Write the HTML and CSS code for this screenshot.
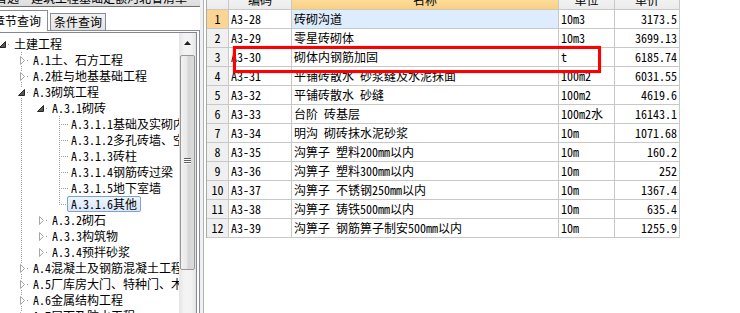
FILE: index.html
```html
<!DOCTYPE html>
<html lang="zh-CN">
<head>
    <meta charset="UTF-8">
    <title>定额查询</title>
    <link rel="stylesheet" href="styles.css">
</head>
<body>
    <div class="app">
        <div class="side">
            <div class="combo">
                <span class="combo-text">首选&nbsp;&nbsp;建筑工程基础定额河北省清单</span>
                <svg class="combo-arrow" width="7" height="4"><path d="M0 0h7l-3.5 4z" fill="#000"/></svg>
            </div>

            <div class="tabs">
                <div class="tab tab-on">章节查询</div>
                <div class="tab">条件查询</div>
            </div>

            <div class="page">
                <div class="tree-box">
                    <div class="tree">
                        <div class="row">
                            <span class="x"><svg width="17" height="16"><path d="M12.5 5.5v6h-6z" fill="#595959" stroke="#262626"/><rect x="15" y="8" width="1" height="1" fill="#a0a0a0"/></svg></span>
                            <span class="t">土建工程</span>
                        </div>
                        <div class="row">
                            <span class="g"></span>
                            <span class="x v"><svg width="17" height="16"><rect x="7" y="3" width="7" height="11" fill="#fff"/><path d="M8.5 4.5l4 4-4 4z" fill="#fff" stroke="#a6a6a6"/><rect x="15" y="8" width="1" height="1" fill="#a0a0a0"/></svg></span>
                            <span class="t">A.1土、石方工程</span>
                        </div>
                        <div class="row">
                            <span class="g"></span>
                            <span class="x v"><svg width="17" height="16"><rect x="7" y="3" width="7" height="11" fill="#fff"/><path d="M8.5 4.5l4 4-4 4z" fill="#fff" stroke="#a6a6a6"/><rect x="15" y="8" width="1" height="1" fill="#a0a0a0"/></svg></span>
                            <span class="t">A.2桩与地基基础工程</span>
                        </div>
                        <div class="row">
                            <span class="g"></span>
                            <span class="x v"><svg width="17" height="16"><rect x="6" y="3" width="8" height="10" fill="#fff"/><path d="M12.5 5.5v6h-6z" fill="#595959" stroke="#262626"/><rect x="15" y="8" width="1" height="1" fill="#a0a0a0"/></svg></span>
                            <span class="t">A.3砌筑工程</span>
                        </div>
                        <div class="row">
                            <span class="g"></span><span class="g v"></span>
                            <span class="x"><svg width="17" height="16"><path d="M12.5 5.5v6h-6z" fill="#595959" stroke="#262626"/><rect x="15" y="8" width="1" height="1" fill="#a0a0a0"/></svg></span>
                            <span class="t">A.3.1砌砖</span>
                        </div>
                        <div class="row">
                            <span class="g"></span><span class="g v"></span><span class="g"></span><span class="l"></span>
                            <span class="t">A.3.1.1基础及实砌内外墙</span>
                        </div>
                        <div class="row">
                            <span class="g"></span><span class="g v"></span><span class="g"></span><span class="l"></span>
                            <span class="t">A.3.1.2多孔砖墙、空心砖墙</span>
                        </div>
                        <div class="row">
                            <span class="g"></span><span class="g v"></span><span class="g"></span><span class="l"></span>
                            <span class="t">A.3.1.3砖柱</span>
                        </div>
                        <div class="row">
                            <span class="g"></span><span class="g v"></span><span class="g"></span><span class="l"></span>
                            <span class="t">A.3.1.4钢筋砖过梁</span>
                        </div>
                        <div class="row">
                            <span class="g"></span><span class="g v"></span><span class="g"></span><span class="l"></span>
                            <span class="t">A.3.1.5地下室墙</span>
                        </div>
                        <div class="row">
                            <span class="g"></span><span class="g v"></span><span class="g"></span><span class="l l-end"></span>
                            <span class="t t-on">A.3.1.6其他</span>
                        </div>
                        <div class="row">
                            <span class="g"></span><span class="g v"></span>
                            <span class="x"><svg width="17" height="16"><path d="M8.5 4.5l4 4-4 4z" fill="#fff" stroke="#a6a6a6"/><rect x="15" y="8" width="1" height="1" fill="#a0a0a0"/></svg></span>
                            <span class="t">A.3.2砌石</span>
                        </div>
                        <div class="row">
                            <span class="g"></span><span class="g v"></span>
                            <span class="x"><svg width="17" height="16"><path d="M8.5 4.5l4 4-4 4z" fill="#fff" stroke="#a6a6a6"/><rect x="15" y="8" width="1" height="1" fill="#a0a0a0"/></svg></span>
                            <span class="t">A.3.3构筑物</span>
                        </div>
                        <div class="row">
                            <span class="g"></span><span class="g v"></span>
                            <span class="x"><svg width="17" height="16"><path d="M8.5 4.5l4 4-4 4z" fill="#fff" stroke="#a6a6a6"/><rect x="15" y="8" width="1" height="1" fill="#a0a0a0"/></svg></span>
                            <span class="t">A.3.4预拌砂浆</span>
                        </div>
                        <div class="row">
                            <span class="g"></span>
                            <span class="x v"><svg width="17" height="16"><rect x="7" y="3" width="7" height="11" fill="#fff"/><path d="M8.5 4.5l4 4-4 4z" fill="#fff" stroke="#a6a6a6"/><rect x="15" y="8" width="1" height="1" fill="#a0a0a0"/></svg></span>
                            <span class="t">A.4混凝土及钢筋混凝土工程</span>
                        </div>
                        <div class="row">
                            <span class="g"></span>
                            <span class="x v"><svg width="17" height="16"><rect x="7" y="3" width="7" height="11" fill="#fff"/><path d="M8.5 4.5l4 4-4 4z" fill="#fff" stroke="#a6a6a6"/><rect x="15" y="8" width="1" height="1" fill="#a0a0a0"/></svg></span>
                            <span class="t">A.5厂库房大门、特种门、木结构工程</span>
                        </div>
                        <div class="row">
                            <span class="g"></span>
                            <span class="x v"><svg width="17" height="16"><rect x="7" y="3" width="7" height="11" fill="#fff"/><path d="M8.5 4.5l4 4-4 4z" fill="#fff" stroke="#a6a6a6"/><rect x="15" y="8" width="1" height="1" fill="#a0a0a0"/></svg></span>
                            <span class="t">A.6金属结构工程</span>
                        </div>
                        <div class="row">
                            <span class="g"></span>
                            <span class="x v"><svg width="17" height="16"><rect x="7" y="3" width="7" height="11" fill="#fff"/><path d="M8.5 4.5l4 4-4 4z" fill="#fff" stroke="#a6a6a6"/><rect x="15" y="8" width="1" height="1" fill="#a0a0a0"/></svg></span>
                            <span class="t">A.7屋面及防水工程</span>
                        </div>
                    </div>

                    <div class="vscroll">
                        <div class="sb-up"><svg width="7" height="4"><path d="M3.5 0l3.5 4h-7z" fill="#222"/></svg></div>
                        <div class="sb-thumb">
                            <span></span><span></span><span></span>
                        </div>
                    </div>
                </div>
            </div>
        </div>

        <div class="split"></div>

        <div class="pane">
            <div class="grid">
                <div class="gr gr-head">
                    <div class="c"></div>
                    <div class="c ctr">编码</div>
                    <div class="c ctr c-hot">名称</div>
                    <div class="c ctr">单位</div>
                    <div class="c ctr">单价</div>
                </div>
                <div class="gr">
                    <div class="c n n-on">1</div><div class="c">A3-28</div><div class="c c-sel">砖砌沟道</div><div class="c">10m3</div><div class="c r">3173.5</div>
                </div>
                <div class="gr">
                    <div class="c n">2</div><div class="c">A3-29</div><div class="c">零星砖砌体</div><div class="c">10m3</div><div class="c r">3699.13</div>
                </div>
                <div class="gr">
                    <div class="c n">3</div><div class="c">A3-30</div><div class="c">砌体内钢筋加固</div><div class="c">t</div><div class="c r">6185.74</div>
                </div>
                <div class="gr">
                    <div class="c n">4</div><div class="c">A3-31</div><div class="c">平铺砖散水 砂浆缝及水泥抹面</div><div class="c">100m2</div><div class="c r">6031.55</div>
                </div>
                <div class="gr">
                    <div class="c n">5</div><div class="c">A3-32</div><div class="c">平铺砖散水 砂缝</div><div class="c">100m2</div><div class="c r">4619.6</div>
                </div>
                <div class="gr">
                    <div class="c n">6</div><div class="c">A3-33</div><div class="c">台阶 砖基层</div><div class="c">100m2水</div><div class="c r">16143.1</div>
                </div>
                <div class="gr">
                    <div class="c n">7</div><div class="c">A3-34</div><div class="c">明沟 砌砖抹水泥砂浆</div><div class="c">10m</div><div class="c r">1071.68</div>
                </div>
                <div class="gr">
                    <div class="c n">8</div><div class="c">A3-35</div><div class="c">沟箅子 塑料200mm以内</div><div class="c">10m</div><div class="c r">160.2</div>
                </div>
                <div class="gr">
                    <div class="c n">9</div><div class="c">A3-36</div><div class="c">沟箅子 塑料300mm以内</div><div class="c">10m</div><div class="c r">252</div>
                </div>
                <div class="gr">
                    <div class="c n">10</div><div class="c">A3-37</div><div class="c">沟箅子 不锈钢250mm以内</div><div class="c">10m</div><div class="c r">1367.4</div>
                </div>
                <div class="gr">
                    <div class="c n">11</div><div class="c">A3-38</div><div class="c">沟箅子 铸铁500mm以内</div><div class="c">10m</div><div class="c r">635.4</div>
                </div>
                <div class="gr">
                    <div class="c n">12</div><div class="c">A3-39</div><div class="c">沟箅子 钢筋箅子制安500mm以内</div><div class="c">10m</div><div class="c r">1255.9</div>
                </div>
            </div>

            <!-- red marker drawn over row 3 -->
            <div class="mark"></div>
        </div>
    </div>
</body>
</html>
```

FILE: styles.css
```css
* {
    margin: 0;
    padding: 0;
    box-sizing: border-box;
}

body {
    width: 740px;
    height: 313px;
    overflow: hidden;
    background: #fff;
    color: #000;
    font-family: "Noto Sans CJK SC", sans-serif;
    font-size: 12px;
    font-feature-settings: "hwid" 1;
}

.app {
    display: flex;
    height: 313px;
}

/* left side: combo, tabs, tree */
.side {
    width: 200px;
    flex: none;
    display: flex;
    flex-direction: column;
}

.combo {
    height: 22px;
    margin-top: -15px;
    margin-left: -2px;
    margin-right: -2px;
    border: 1px solid #707070;
    border-radius: 3px;
    background: linear-gradient(#f2f2f2, #dddddd);
    display: flex;
    align-items: flex-end;
    justify-content: space-between;
    padding: 0 6px 1px 0;
    white-space: nowrap;
    overflow: hidden;
}

.combo-text {
    line-height: 14px;
    margin-left: -4px;
}

.combo-arrow {
    margin-bottom: 5px;
}

.tabs {
    height: 23px;
    display: flex;
    align-items: flex-end;
    margin-left: -14px;
}

.tab {
    height: 17px;
    line-height: 15px;
    padding: 0 3px;
    margin-left: 2px;
    border: 1px solid #898c95;
    border-bottom: none;
    background: linear-gradient(#f3f3f3, #e3e3e3);
    white-space: nowrap;
}

.tab-on {
    height: 21px;
    line-height: 19px;
    padding: 0 6px;
    margin: 0 0 -1px 0;
    background: #fff;
    position: relative;
    z-index: 1;
}

.page {
    flex: 1;
    min-height: 0;
    border: 1px solid #898c95;
    border-bottom: none;
    margin-left: -4px;
    padding: 1px 2px 0 2px;
}

.tree-box {
    height: 100%;
    border: 1px solid #828790;
    border-bottom: none;
    display: flex;
    margin-left: -2px;
}

.tree {
    flex: 1;
    min-width: 0;
    overflow: hidden;
    padding-top: 3px;
    margin-left: -5px;
}

.row {
    display: flex;
    align-items: center;
    height: 16px;
    white-space: nowrap;
}

.g {
    width: 19px;
    height: 16px;
    flex: none;
}

.g.v {
    background: repeating-linear-gradient(#a0a0a0 0 1px, transparent 1px 2px) 9px 0 / 1px 100% no-repeat;
}

.x {
    width: 17px;
    height: 16px;
    flex: none;
}

.x svg {
    display: block;
}

.x.v {
    background: repeating-linear-gradient(#a0a0a0 0 1px, transparent 1px 2px) 9px 0 / 1px 100% no-repeat;
}

.l {
    width: 19px;
    height: 16px;
    flex: none;
    margin-right: -2px;
    background:
        repeating-linear-gradient(#a0a0a0 0 1px, transparent 1px 2px) 9px 0 / 1px 100% no-repeat,
        repeating-linear-gradient(to right, #a0a0a0 0 1px, transparent 1px 2px) 11px 8px / 8px 1px no-repeat;
}

.l.l-end {
    background:
        repeating-linear-gradient(#a0a0a0 0 1px, transparent 1px 2px) 9px 0 / 1px 9px no-repeat,
        repeating-linear-gradient(to right, #a0a0a0 0 1px, transparent 1px 2px) 11px 8px / 8px 1px no-repeat;
}

.t {
    height: 16px;
    line-height: 14px;
    padding: 0 3px;
    border: 1px solid transparent;
    border-radius: 2px;
}

.t-on {
    border-color: #7da2ce;
    background: linear-gradient(#eef5fd, #d9e8fb);
}

.vscroll {
    width: 17px;
    flex: none;
    display: flex;
    flex-direction: column;
    align-items: center;
    background: linear-gradient(to right, #e4e4e4, #f3f3f3 30%, #f3f3f3 70%, #e4e4e4);
}

.sb-up {
    height: 22px;
    display: flex;
    align-items: center;
    justify-content: center;
    padding-bottom: 2px;
}

.sb-up svg {
    display: block;
}

.sb-thumb {
    width: 15px;
    height: 215px;
    border: 1px solid #979797;
    border-radius: 2px;
    background: linear-gradient(to right, #f2f2f2, #e8e8e8 45%, #d6d6d6 55%, #dcdcdc);
    display: flex;
    flex-direction: column;
    align-items: center;
    justify-content: center;
    gap: 1px;
    padding-bottom: 5px;
}

.sb-thumb span {
    width: 7px;
    height: 1px;
    background: #5f5f5f;
    box-shadow: 0 1px 0 #fff;
}

/* splitter between the panes */
.split {
    width: 6px;
    flex: none;
    background: linear-gradient(to right, #f0f0f0 0 3px, #b4b4b4 3px 4px, #fff 4px);
}

/* right pane: the quota grid */
.pane {
    flex: 1;
    position: relative;
}

.grid {
    margin-top: -9px;
    width: 474px;
    border-left: 1px solid #a9a9a9;
}

.gr {
    display: grid;
    grid-template-columns: 22px 63px 267px 56px 65px;
    height: 19px;
}

.c {
    height: 19px;
    line-height: 18px;
    padding: 0 2px 0 2px;
    border-right: 1px solid #c8c8c8;
    border-bottom: 1px solid #c8c8c8;
    white-space: nowrap;
    overflow: hidden;
}

.gr-head .c {
    background: linear-gradient(#f8f8f8, #ebebeb);
}

.gr-head .c-hot {
    background: linear-gradient(#fde8b9, #fbd07f);
}

.ctr {
    text-align: center;
}

.n {
    text-align: center;
    background: #f0f0f0;
    padding: 0;
}

.n-on {
    background: #fcd595;
}

.c-sel {
    background: #deedfd;
}

.r {
    text-align: right;
}

.mark {
    position: absolute;
    left: 27px;
    top: 46px;
    width: 368px;
    height: 27px;
    border: 3px solid #ff0000;
    box-shadow: 0 0 1px rgba(255, 0, 0, 0.5);
}
```
